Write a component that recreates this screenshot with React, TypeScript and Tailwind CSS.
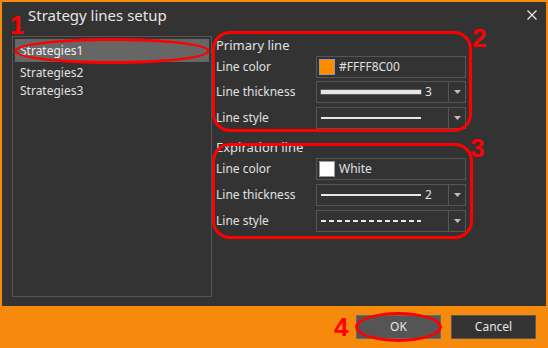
import React from "react";

const font = { fontFamily: '"Noto Sans", "Open Sans", sans-serif' };

function Arrow() {
  return (
    <div className="w-[17px] h-full border-l border-[#555] flex items-center justify-center">
      <svg width="7" height="4" viewBox="0 0 7 4">
        <path d="M0 0 L7 0 L3.5 4 Z" fill="#bdbdbd" />
      </svg>
    </div>
  );
}

function Row({ label, children, className = "" }: { label: string; children: React.ReactNode; className?: string }) {
  return (
    <div className={"flex items-center h-[22px] " + className}>
      <div className="w-[100px] text-[12px] text-[#e0e0e0] leading-none">{label}</div>
      <div className="w-[150px] h-[22px] border border-[#555] flex items-center">{children}</div>
    </div>
  );
}

function ColorBox({ color, text }: { color: string; text: string }) {
  return (
    <div className="flex items-center pl-[2px] gap-[4px] h-full">
      <div className="w-[16px] h-[16px] border border-[#9a9a9a]" style={{ background: color }} />
      <span className="text-[12px] text-[#e0e0e0] leading-none">{text}</span>
    </div>
  );
}

function Thick({ h, n }: { h: number; n: string }) {
  return (
    <>
      <div className="flex-1 flex items-center pl-[4px] h-full">
        <div className="w-[100px] bg-[#e6e6e6]" style={{ height: h, boxShadow: h > 2 ? "0 0 0 0.5px #888" : undefined }} />
        <span className="ml-[4px] text-[12px] text-[#e0e0e0] leading-none">{n}</span>
      </div>
      <Arrow />
    </>
  );
}

function Style({ dashed }: { dashed?: boolean }) {
  return (
    <>
      <div className="flex-1 flex items-center pl-[4px] h-full">
        {dashed ? (
          <svg width="100" height="2">
            <line x1="0" y1="1" x2="100" y2="1" stroke="#e6e6e6" strokeWidth="2" strokeDasharray="5 3" />
          </svg>
        ) : (
          <div className="w-[100px] h-[2px] bg-[#e6e6e6]" />
        )}
      </div>
      <Arrow />
    </>
  );
}

export default function App() {
  return (
    <div className="w-[548px] h-[348px] bg-[#f68a0c] pt-[2px] px-[2px] relative overflow-hidden" style={font}>
      <div className="h-[304px] bg-[#333333] flex flex-col">
        <div className="h-[34px] flex items-center justify-between pl-[26px] pr-[9px]">
          <span className="text-[15px] text-[#e6e6e6] leading-none -mt-[8px]">Strategy lines setup</span>
          <svg width="10" height="10" viewBox="0 0 10 10" className="-mt-[8px]">
            <path d="M0.5 0.5 L9.5 9.5 M9.5 0.5 L0.5 9.5" stroke="#e6e6e6" strokeWidth="1.3" />
          </svg>
        </div>
        <div className="flex pl-[10px] gap-[4px]">
          <div className="w-[200px] h-[261px] border border-[#555] p-[2px] flex flex-col">
            <div className="h-[23px] bg-[#666666] flex items-center pl-[5px] text-[12px] text-[#ececec]">Strategies1</div>
            <div className="h-[18px] mt-[2px] flex items-center pl-[5px] text-[12px] text-[#e0e0e0]">Strategies2</div>
            <div className="h-[18px] flex items-center pl-[5px] text-[12px] text-[#e0e0e0]">Strategies3</div>
          </div>
          <div className="w-[250px] flex flex-col">
            <div className="h-[20px] flex items-center text-[13px] text-[#e0e0e0]">Primary line</div>
            <Row label="Line color">
              <ColorBox color="#ff8c00" text="#FFFF8C00" />
            </Row>
            <Row label="Line thickness" className="mt-[3px]">
              <Thick h={4} n="3" />
            </Row>
            <Row label="Line style" className="mt-[4px]">
              <Style />
            </Row>
            <div className="h-[20px] mt-[9px] flex items-center text-[13px] text-[#e0e0e0]">Expiration line</div>
            <Row label="Line color">
              <ColorBox color="#ffffff" text="White" />
            </Row>
            <Row label="Line thickness" className="mt-[4px]">
              <Thick h={2} n="2" />
            </Row>
            <Row label="Line style" className="mt-[4px]">
              <Style dashed />
            </Row>
          </div>
        </div>
      </div>
      <div className="flex justify-end gap-[10px] pr-[10px] pt-[9px]">
        <button className="w-[85px] h-[24px] bg-[#555555] border border-[#6a6a6a] text-[12px] text-[#e6e6e6]">OK</button>
        <button className="w-[85px] h-[24px] bg-[#333333] border border-[#5a5a5a] text-[12px] text-[#e6e6e6]">Cancel</button>
      </div>

      {/* red annotations */}
      <span className="absolute left-[10px] top-[12px] text-[26px] font-bold text-[#ff0000] leading-none" style={{ fontFamily: '"Liberation Sans", Arial, sans-serif' }}>1</span>
      <div className="absolute left-[14px] top-[38px] w-[196px] h-[26px] rounded-[50%] border-[3px] border-[#ff0000]" />
      <span className="absolute left-[472px] top-[25px] text-[26px] font-bold text-[#ff0000] leading-none" style={{ fontFamily: '"Liberation Sans", Arial, sans-serif' }}>2</span>
      <div className="absolute left-[212px] top-[31px] w-[260px] h-[101px] rounded-[18px] border-[3px] border-[#ff0000]" />
      <span className="absolute left-[470px] top-[135px] text-[26px] font-bold text-[#ff0000] leading-none" style={{ fontFamily: '"Liberation Sans", Arial, sans-serif' }}>3</span>
      <div className="absolute left-[212px] top-[143px] w-[261px] h-[96px] rounded-[18px] border-[3px] border-[#ff0000]" />
      <span className="absolute left-[334px] top-[314px] text-[26px] font-bold text-[#ff0000] leading-none" style={{ fontFamily: '"Liberation Sans", Arial, sans-serif' }}>4</span>
      <div className="absolute left-[355px] top-[312px] w-[87px] h-[30px] rounded-[50%] border-[3px] border-[#ff0000]" />
    </div>
  );
}
